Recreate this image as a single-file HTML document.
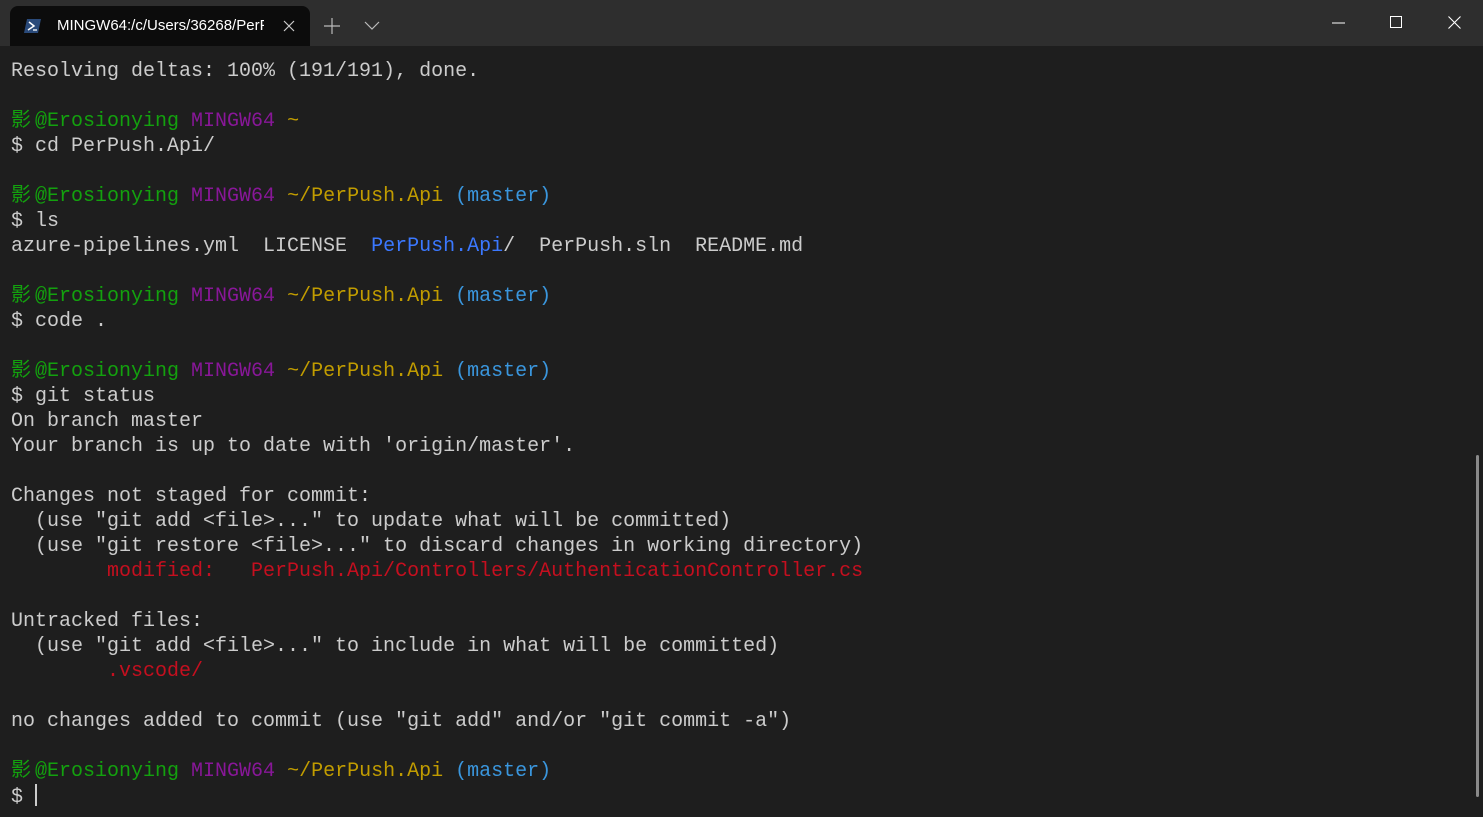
<!DOCTYPE html>
<html><head><meta charset="utf-8"><style>
html,body{margin:0;padding:0;width:1483px;height:817px;overflow:hidden;background:#0c0c0c;}
.top{position:absolute;left:0;top:0;width:1483px;height:46px;background:#2e2e2e;}
.tab{position:absolute;left:10px;top:6px;width:300px;height:40px;background:#0c0c0c;border-radius:8px 8px 0 0;}
.tab .t{position:absolute;left:47px;top:11px;font:15px "Liberation Sans",sans-serif;color:#fff;white-space:nowrap;width:207px;overflow:hidden;}
.term{position:absolute;left:0;top:46px;width:1483px;height:771px;background:#1e1e1e;}
pre{position:absolute;left:11px;top:59px;margin:0;font:20px/25px "Liberation Mono","Noto Sans CJK SC",monospace;color:#cccccc;}
.g{color:#13a10e}.p{color:#881798}.y{color:#c19c00}.b{color:#3a96dd}.bl{color:#3b78ff}.r{color:#c50f1f}
.k{display:inline-block;width:24px;}
.cur{display:inline-block;width:2px;height:22px;background:#ccc;vertical-align:-4px;}
.sb{position:absolute;left:1476px;top:455px;width:3px;height:342px;background:#8a8a8a;border-radius:2px;}
</style></head><body>
<div class="top">
<div class="tab">
<svg style="position:absolute;left:14px;top:12px" width="18" height="16" viewBox="0 0 18 16"><path d="M3 1h14l-3 14H0z" fill="#2a4a7a"/><path d="M5 4l5 4-6 4" stroke="#fff" stroke-width="1.5" fill="none"/><path d="M9 12h4" stroke="#fff" stroke-width="1.3"/></svg>
<div class="t">MINGW64:/c/Users/36268/PerPush.Api</div>
<svg style="position:absolute;left:273px;top:14px" width="12" height="12"><path d="M1 1L11 11M11 1L1 11" stroke="#ccc" stroke-width="1.2"/></svg>
</div>
<svg style="position:absolute;left:323px;top:17px" width="18" height="18"><path d="M9 1V17M1 9H17" stroke="#bbb" stroke-width="1.2"/></svg>
<svg style="position:absolute;left:364px;top:21px" width="16" height="10"><path d="M1 1L8 8L15 1" stroke="#bbb" stroke-width="1.2" fill="none"/></svg>
<svg style="position:absolute;left:1332px;top:22px" width="14" height="2"><path d="M0 1H13" stroke="#fff" stroke-width="1"/></svg>
<svg style="position:absolute;left:1390px;top:16px" width="13" height="13"><rect x="0.5" y="0.5" width="11" height="11" stroke="#fff" fill="none"/></svg>
<svg style="position:absolute;left:1448px;top:16px" width="13" height="13"><path d="M0.5 0.5L12.5 12.5M12.5 0.5L0.5 12.5" stroke="#fff" stroke-width="1.1"/></svg>
</div>
<div class="term"></div>
<pre>Resolving deltas: 100% (191/191), done.

<span class="g"><span class="k">影</span>@Erosionying</span> <span class="p">MINGW64</span> <span class="y">~</span>
$ cd PerPush.Api/

<span class="g"><span class="k">影</span>@Erosionying</span> <span class="p">MINGW64</span> <span class="y">~/PerPush.Api</span> <span class="b">(master)</span>
$ ls
azure-pipelines.yml  LICENSE  <span class="bl">PerPush.Api</span>/  PerPush.sln  README.md

<span class="g"><span class="k">影</span>@Erosionying</span> <span class="p">MINGW64</span> <span class="y">~/PerPush.Api</span> <span class="b">(master)</span>
$ code .

<span class="g"><span class="k">影</span>@Erosionying</span> <span class="p">MINGW64</span> <span class="y">~/PerPush.Api</span> <span class="b">(master)</span>
$ git status
On branch master
Your branch is up to date with 'origin/master'.

Changes not staged for commit:
  (use "git add &lt;file&gt;..." to update what will be committed)
  (use "git restore &lt;file&gt;..." to discard changes in working directory)
        <span class="r">modified:   PerPush.Api/Controllers/AuthenticationController.cs</span>

Untracked files:
  (use "git add &lt;file&gt;..." to include in what will be committed)
        <span class="r">.vscode/</span>

no changes added to commit (use "git add" and/or "git commit -a")

<span class="g"><span class="k">影</span>@Erosionying</span> <span class="p">MINGW64</span> <span class="y">~/PerPush.Api</span> <span class="b">(master)</span>
$ <span class="cur"></span></pre>
<div class="sb"></div>
</body></html>
